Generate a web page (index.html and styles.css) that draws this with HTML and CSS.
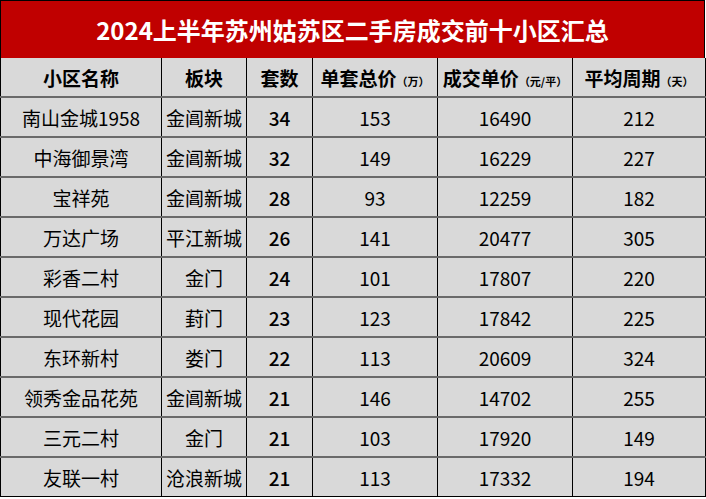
FILE: index.html
```html
<!DOCTYPE html>
<html lang="zh">
<head>
<meta charset="utf-8">
<link rel="stylesheet" href="styles.css">
</head>
<body>
<div class="sheet">
  <div class="title">2024上半年苏州姑苏区二手房成交前十小区汇总</div>
  <table class="grid">
    <colgroup>
      <col class="c1"><col class="c2"><col class="c3"><col class="c4"><col class="c5"><col class="c6">
    </colgroup>
    <thead>
      <tr>
        <th>小区名称</th>
        <th>板块</th>
        <th>套数</th>
        <th>单套总价<span class="unit">（万）</span></th>
        <th>成交单价<span class="unit">（元/平）</span></th>
        <th>平均周期<span class="unit">（天）</span></th>
      </tr>
    </thead>
    <tbody>
      <tr><td>南山金城1958</td><td>金阊新城</td><td class="num-b">34</td><td>153</td><td>16490</td><td>212</td></tr>
      <tr><td>中海御景湾</td><td>金阊新城</td><td class="num-b">32</td><td>149</td><td>16229</td><td>227</td></tr>
      <tr><td>宝祥苑</td><td>金阊新城</td><td class="num-b">28</td><td>93</td><td>12259</td><td>182</td></tr>
      <tr><td>万达广场</td><td>平江新城</td><td class="num-b">26</td><td>141</td><td>20477</td><td>305</td></tr>
      <tr><td>彩香二村</td><td>金门</td><td class="num-b">24</td><td>101</td><td>17807</td><td>220</td></tr>
      <tr><td>现代花园</td><td>葑门</td><td class="num-b">23</td><td>123</td><td>17842</td><td>225</td></tr>
      <tr><td>东环新村</td><td>娄门</td><td class="num-b">22</td><td>113</td><td>20609</td><td>324</td></tr>
      <tr><td>领秀金品花苑</td><td>金阊新城</td><td class="num-b">21</td><td>146</td><td>14702</td><td>255</td></tr>
      <tr><td>三元二村</td><td>金门</td><td class="num-b">21</td><td>103</td><td>17920</td><td>149</td></tr>
      <tr><td>友联一村</td><td>沧浪新城</td><td class="num-b">21</td><td>113</td><td>17332</td><td>194</td></tr>
    </tbody>
  </table>
</div>
</body>
</html>
```
FILE: styles.css
```css
html, body {
  margin: 0;
  padding: 0;
  background: #ffffff;
}
.sheet {
  width: 705px;
  font-family: "Noto Sans CJK SC", "Noto Sans", sans-serif;
  color: #000;
}
.title {
  box-sizing: border-box;
  height: 58px;
  background: #c00000;
  color: #ffffff;
  font-weight: 700;
  font-size: 24px;
  display: flex;
  align-items: center;
  justify-content: center;
  border: 1px solid #000;
  border-bottom: none;
}
.grid {
  width: 705px;
  border-collapse: collapse;
  table-layout: fixed;
  background: #d9d9d9;
}
.c1 { width: 161px; }
.c2 { width: 85px; }
.c3 { width: 66px; }
.c4 { width: 125px; }
.c5 { width: 135px; }
.c6 { width: 133px; }
.grid th, .grid td {
  height: 38px;
  padding: 0;
  text-align: center;
  vertical-align: middle;
  border-left: 1px solid #000;
  border-right: 1px solid #000;
  border-top: 2px solid #6a6a6a;
  border-bottom: 2px solid #6a6a6a;
  white-space: nowrap;
}
.grid th {
  font-size: 19px;
  font-weight: 700;
  border-top: none;
}
.grid td {
  font-size: 19px;
  font-weight: 400;
  line-height: 1;
}
.grid tbody tr:last-child td {
  border-bottom: 1px solid #000;
}
.grid th .unit {
  font-size: 11px;
  font-weight: 700;
  text-spacing-trim: space-all;
}
.grid td.num-b {
  font-weight: 500;
}
```
